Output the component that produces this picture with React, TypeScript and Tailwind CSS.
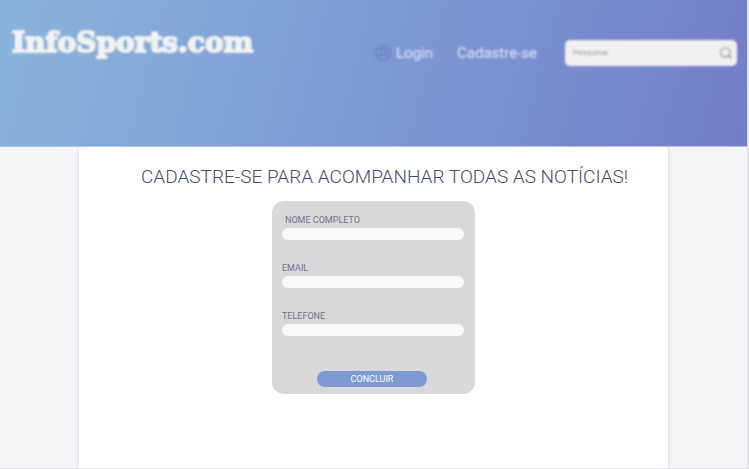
import { CircleUserRound, Search } from "lucide-react";

const fields = [
  { id: "nome", label: "NOME COMPLETO", type: "text", labelClass: "pl-[3px]" },
  { id: "email", label: "EMAIL", type: "email", labelClass: "" },
  { id: "telefone", label: "TELEFONE", type: "tel", labelClass: "" },
];

function Header() {
  return (
    <header className="h-[147px] border-b border-[#b4c3e4] bg-[linear-gradient(105deg,#88b4da_0%,#809fd6_40%,#7990d1_68%,#747cc8_100%)]">
      <div className="flex items-start justify-between pr-[10px] pl-3 blur-[1px]">
        <a
          href="#"
          className="pt-[23px] font-['DejaVu_Serif',serif] text-[28px] leading-[40px] font-bold text-[#f2f2f2] [-webkit-text-stroke:2px_#f2f2f2]"
        >
          InfoSports.com
        </a>
        <div className="flex items-center pt-[40px]">
          <nav className="flex items-center font-['Roboto',sans-serif] text-[15px] leading-[26px] text-[#e2e8f8]">
            <a href="#" className="flex items-center gap-1">
              <CircleUserRound size={18} strokeWidth={2} className="text-[#6b84bd]" />
              Login
            </a>
            <a href="#" className="ml-6">
              Cadastre-se
            </a>
          </nav>
          <form className="ml-7 flex h-[26px] w-[172px] items-center rounded-[5px] bg-[#f0f0f0] pr-1 pl-2">
            <input
              type="search"
              aria-label="Pesquisar"
              placeholder="Pesquisar"
              className="min-w-0 flex-1 bg-transparent font-['Roboto',sans-serif] text-[8px] text-[#777] outline-none placeholder:text-[#a0a0a8]"
            />
            <button type="button" aria-label="Buscar">
              <Search size={14} strokeWidth={2} className="text-[#909090]" />
            </button>
          </form>
        </div>
      </div>
    </header>
  );
}

export default function App() {
  return (
    <div className="flex min-h-screen flex-col border-r-2 border-b border-[#e2e3e6] bg-[#f4f5f7]">
      <Header />
      <main className="flex flex-1 flex-col px-[79px]">
        <section className="flex flex-1 flex-col items-center rounded-t-[4px] bg-white pt-4 shadow-[0_0_4px_#cfd3dc] [clip-path:inset(0_-6px)]">
          <h1 className="pl-[22px] font-['Roboto',sans-serif] text-[19px] leading-[28px] font-light whitespace-nowrap text-[#484b76]">
            CADASTRE-SE PARA ACOMPANHAR TODAS AS NOTÍCIAS!
          </h1>
          <form className="mt-[10px] flex w-[203px] flex-col rounded-xl bg-[#d8d8d8] pt-3 pr-[11px] pb-[7px] pl-[10px] font-['Roboto',sans-serif] text-[9px] leading-[14px]">
            <div className="flex flex-col gap-[21px]">
              {fields.map((field) => (
                <div key={field.id} className="flex flex-col gap-px text-[#6c6f92]">
                  <label htmlFor={field.id} className={field.labelClass}>
                    {field.label}
                  </label>
                  <input
                    id={field.id}
                    type={field.type}
                    className="h-3 w-full rounded-full bg-[#f8f8f8] px-2 outline-none"
                  />
                </div>
              ))}
            </div>
            <button
              type="button"
              className="mt-[35px] ml-[35px] h-4 w-[110px] rounded-full bg-[#7e99d2] text-white"
            >
              CONCLUIR
            </button>
          </form>
        </section>
      </main>
    </div>
  );
}
